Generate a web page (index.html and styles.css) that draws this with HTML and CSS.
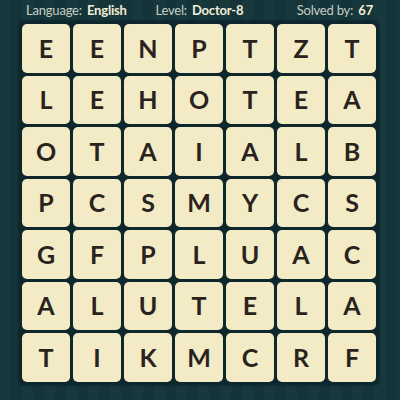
FILE: index.html
```html
<!DOCTYPE html>
<html>
<head>
<meta charset="utf-8">
<link rel="stylesheet" href="styles.css">
</head>
<body>
<div class="page">
  <div class="header">
    <span class="item lang">Language: <b>English</b></span>
    <span class="item level">Level: <b>Doctor-8</b></span>
    <span class="item solved">Solved by: <b>67</b></span>
  </div>
  <div class="board">
    <div class="tile">E</div><div class="tile">E</div><div class="tile">N</div><div class="tile">P</div><div class="tile">T</div><div class="tile">Z</div><div class="tile">T</div>
    <div class="tile">L</div><div class="tile">E</div><div class="tile">H</div><div class="tile">O</div><div class="tile">T</div><div class="tile">E</div><div class="tile">A</div>
    <div class="tile">O</div><div class="tile">T</div><div class="tile">A</div><div class="tile">I</div><div class="tile">A</div><div class="tile">L</div><div class="tile">B</div>
    <div class="tile">P</div><div class="tile">C</div><div class="tile">S</div><div class="tile">M</div><div class="tile">Y</div><div class="tile">C</div><div class="tile">S</div>
    <div class="tile">G</div><div class="tile">F</div><div class="tile">P</div><div class="tile">L</div><div class="tile">U</div><div class="tile">A</div><div class="tile">C</div>
    <div class="tile">A</div><div class="tile">L</div><div class="tile">U</div><div class="tile">T</div><div class="tile">E</div><div class="tile">L</div><div class="tile">A</div>
    <div class="tile">T</div><div class="tile">I</div><div class="tile">K</div><div class="tile">M</div><div class="tile">C</div><div class="tile">R</div><div class="tile">F</div>
  </div>
</div>
</body>
</html>
```
FILE: styles.css
```css
html, body {
  margin: 0;
  padding: 0;
}
body {
  width: 400px;
  height: 400px;
  overflow: hidden;
  background-color: #16363b;
  background-image: repeating-linear-gradient(90deg, #17383d 0px, #17383d 11px, #14343a 11px, #14343a 22px);
  font-family: Lato, "Open Sans", sans-serif;
}
.page {
  display: flex;
  flex-direction: column;
  align-items: flex-start;
}
.header {
  box-sizing: border-box;
  width: 400px;
  height: 21px;
  display: flex;
  align-items: center;
  padding: 0 27px 2px 26px;
  font-size: 13px;
  letter-spacing: -0.2px;
  color: #c8cfc2;
  white-space: nowrap;
}
.header b {
  font-weight: 700;
  color: #f3eed6;
  margin-left: 2px;
}
.lang { width: 131px; }
.level { width: 143px; }
.solved { margin-left: auto; }
.board {
  margin-left: 19px;
  padding: 3px;
  background: #0d272c;
  border-radius: 5px;
  display: grid;
  grid-template-columns: repeat(7, 48px);
  grid-auto-rows: 48.5px;
  column-gap: 3px;
  row-gap: 3px;
  box-shadow: 0 0 3px rgba(0,0,0,0.4);
}
.tile {
  background: #f2ebc5;
  border-radius: 5px;
  display: flex;
  align-items: center;
  justify-content: center;
  font-family: Lato, sans-serif;
  font-weight: 700;
  font-size: 25px;
  color: #2a231d;
  padding-bottom: 1px;
  box-sizing: border-box;
}
```
